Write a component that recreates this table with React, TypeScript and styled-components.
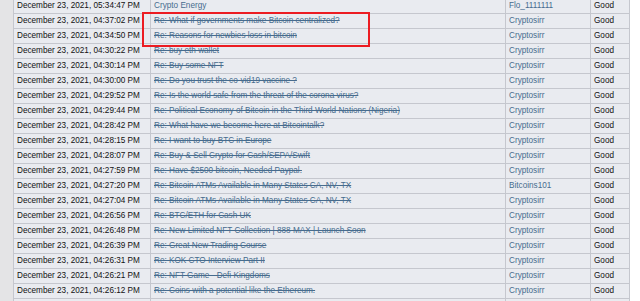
import React from "react";
import styled, { createGlobalStyle } from "styled-components";

const Global = createGlobalStyle`
  html, body { margin: 0; padding: 0; background: #ffffff; overflow: hidden; }
  body { font-family: "Liberation Sans", Arial, sans-serif; }
`;

const Page = styled.div`
  position: relative;
  display: flex;
  align-items: flex-start;
  width: 640px;
  height: 301px;
  overflow: hidden;
  background: #ffffff;
`;

const Gutter = styled.div`
  width: 13px;
  height: 301px;
  flex: none;
  background: #e4e4e6;
`;

const Table = styled.table`
  flex: none;
  margin-top: -2px;
  table-layout: fixed;
  border-collapse: separate;
  border-spacing: 1px;
  background: #c5c7ce;
  width: 617px;
  font-family: "Liberation Sans", Arial, sans-serif;
  font-size: 8.2px;
`;

const Cell = styled.td<{ $w: number }>`
  width: ${(p) => p.$w}px;
  height: 14px;
  padding: 0 0 0 3px;
  box-sizing: border-box;
  line-height: 14px;
  background: #e9ebf0;
  color: #111111;
  white-space: nowrap;
  overflow: hidden;
  vertical-align: middle;
`;

const Link = styled.a<{ $struck?: boolean }>`
  color: #476c8e;
  text-decoration: ${(p) => (p.$struck ? "line-through" : "none")};
  cursor: pointer;
`;

const Highlight = styled.div`
  position: absolute;
  left: 142px;
  top: 12px;
  width: 228px;
  height: 35px;
  box-sizing: border-box;
  border: 2px solid #ec1c22;
  pointer-events: none;
`;

type Row = { time: string; topic: string; user: string; struck: boolean };

const rows: Row[] = [
  { time: "05:34:47", topic: "Crypto Energy", user: "Flo_1111111", struck: false },
  { time: "04:37:02", topic: "Re: What if governments make Bitcoin centralized?", user: "Cryptosirr", struck: true },
  { time: "04:34:50", topic: "Re: Reasons for newbies loss in bitcoin", user: "Cryptosirr", struck: true },
  { time: "04:30:22", topic: "Re: buy eth wallet", user: "Cryptosirr", struck: true },
  { time: "04:30:14", topic: "Re: Buy some NFT", user: "Cryptosirr", struck: true },
  { time: "04:30:00", topic: "Re: Do you trust the co-vid19 vaccine ?", user: "Cryptosirr", struck: true },
  { time: "04:29:52", topic: "Re: Is the world safe from the threat of the corona virus?", user: "Cryptosirr", struck: true },
  { time: "04:29:44", topic: "Re: Political Economy of Bitcoin in the Third World Nations (Nigeria)", user: "Cryptosirr", struck: true },
  { time: "04:28:42", topic: "Re: What have we become here at Bitcointalk?", user: "Cryptosirr", struck: true },
  { time: "04:28:15", topic: "Re: I want to buy BTC in Europe", user: "Cryptosirr", struck: true },
  { time: "04:28:07", topic: "Re: Buy & Sell Crypto for Cash/SEPA/Swift", user: "Cryptosirr", struck: true },
  { time: "04:27:59", topic: "Re: Have $2500 bitcoin, Needed Paypal.", user: "Cryptosirr", struck: true },
  { time: "04:27:20", topic: "Re: Bitcoin ATMs Available in Many States CA, NV, TX", user: "Bitcoins101", struck: true },
  { time: "04:27:04", topic: "Re: Bitcoin ATMs Available in Many States CA, NV, TX", user: "Cryptosirr", struck: true },
  { time: "04:26:56", topic: "Re: BTC/ETH for Cash UK", user: "Cryptosirr", struck: true },
  { time: "04:26:48", topic: "Re: New Limited NFT Collection | 888 MAX | Launch Soon", user: "Cryptosirr", struck: true },
  { time: "04:26:39", topic: "Re: Great New Trading Course", user: "Cryptosirr", struck: true },
  { time: "04:26:31", topic: "Re: KOK CTO Interview Part II", user: "Cryptosirr", struck: true },
  { time: "04:26:21", topic: "Re: NFT Game - Defi Kingdoms", user: "Cryptosirr", struck: true },
  { time: "04:26:12", topic: "Re: Coins with a potential like the Ethereum.", user: "Cryptosirr", struck: true },
];

export default function App() {
  return (
    <>
      <Global />
      <Page>
        <Gutter />
        <Table>
          <tbody>
            {rows.map((r, i) => (
              <tr key={i}>
                <Cell $w={136}>December 23, 2021, {r.time} PM</Cell>
                <Cell $w={354}>
                  <Link $struck={r.struck}>{r.topic}</Link>
                </Cell>
                <Cell $w={84}>
                  <Link>{r.user}</Link>
                </Cell>
                <Cell $w={38}>Good</Cell>
              </tr>
            ))}
            <tr>
              <Cell $w={136} />
              <Cell $w={354} />
              <Cell $w={84} />
              <Cell $w={38} />
            </tr>
          </tbody>
        </Table>
        <Highlight />
      </Page>
    </>
  );
}
